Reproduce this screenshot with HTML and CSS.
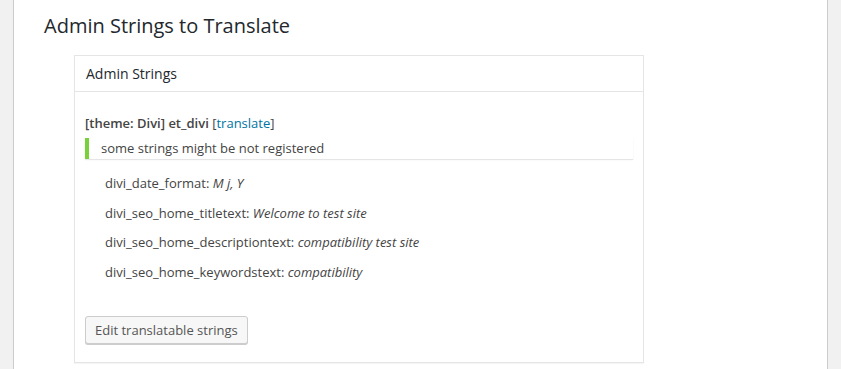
FILE: index.html
```html
<!DOCTYPE html>
<html lang="en">
<head>
    <meta charset="UTF-8">
    <meta name="viewport" content="width=device-width, initial-scale=1.0">
    <title>Admin Strings to Translate</title>
    <link rel="stylesheet" href="styles.css">
</head>
<body>
    <div class="wrap">
        <div class="page">
            <h2 class="title">Admin Strings to Translate</h2>

            <div class="postbox">
                <h3 class="postbox-head">Admin Strings</h3>
                <div class="postbox-body">
                    <p class="source"><strong>[theme: Divi] et_divi</strong> [<a href="#">translate</a>]</p>
                    <div class="notice"><p>some strings might be not registered</p></div>
                    <ul class="strings">
                        <li>divi_date_format: <em>M j, Y</em></li>
                        <li>divi_seo_home_titletext: <em>Welcome to test site</em></li>
                        <li>divi_seo_home_descriptiontext: <em>compatibility test site</em></li>
                        <li>divi_seo_home_keywordstext: <em>compatibility</em></li>
                    </ul>
                    <button class="button">Edit translatable strings</button>
                </div>
            </div>
        </div>
    </div>
</body>
</html>
```

FILE: styles.css
```css
* {
    box-sizing: border-box;
}

body {
    margin: 0;
    background-color: #f1f1f1;
    font-family: "Open Sans", sans-serif;
    font-size: 13px;
    color: #444;
}

.wrap {
    padding-left: 13px;
    height: 369px;
}

.page {
    width: 815px;
    height: 100%;
    background-color: #fff;
    border-left: 1px solid #ccc;
    border-right: 1px solid #ccc;
    padding: 11px 0 0 30px;
}

.title {
    margin: 0 0 15px 0;
    font-size: 20px;
    font-weight: 400;
    line-height: 29px;
    color: #23282d;
}

.postbox {
    margin-left: 30px;
    width: 570px;
    border: 1px solid #e5e5e5;
    box-shadow: 0 1px 1px rgba(0, 0, 0, 0.04);
}

.postbox-head {
    margin: 0;
    padding: 8px 11px;
    font-size: 14px;
    font-weight: 400;
    line-height: 19px;
    color: #23282d;
    border-bottom: 1px solid #e5e5e5;
}

.postbox-body {
    padding: 22px 10px 18px;
}

.source {
    margin: 0 0 6px 0;
    line-height: 18px;
}

.source strong {
    font-weight: 600;
}

.source a {
    color: #0074a2;
    text-decoration: none;
}

.notice {
    background-color: #fff;
    border-left: 4px solid #7ad03a;
    box-shadow: 0 1px 1px 0 rgba(0, 0, 0, 0.1);
    padding: 2px 12px;
}

.notice p {
    margin: 0;
    line-height: 17px;
}

.strings {
    list-style: none;
    margin: 15px 0 0 20px;
    padding: 0 0 24px 0;
}

.strings li {
    line-height: 19.5px;
    margin-bottom: 10px;
}

.button {
    height: 28px;
    padding: 0 9px 1px;
    font-family: "Open Sans", sans-serif;
    font-size: 13px;
    line-height: 26px;
    color: #555;
    background-color: #f7f7f7;
    border: 1px solid #ccc;
    border-radius: 3px;
    box-shadow: 0 1px 0 #ccc;
}
```
